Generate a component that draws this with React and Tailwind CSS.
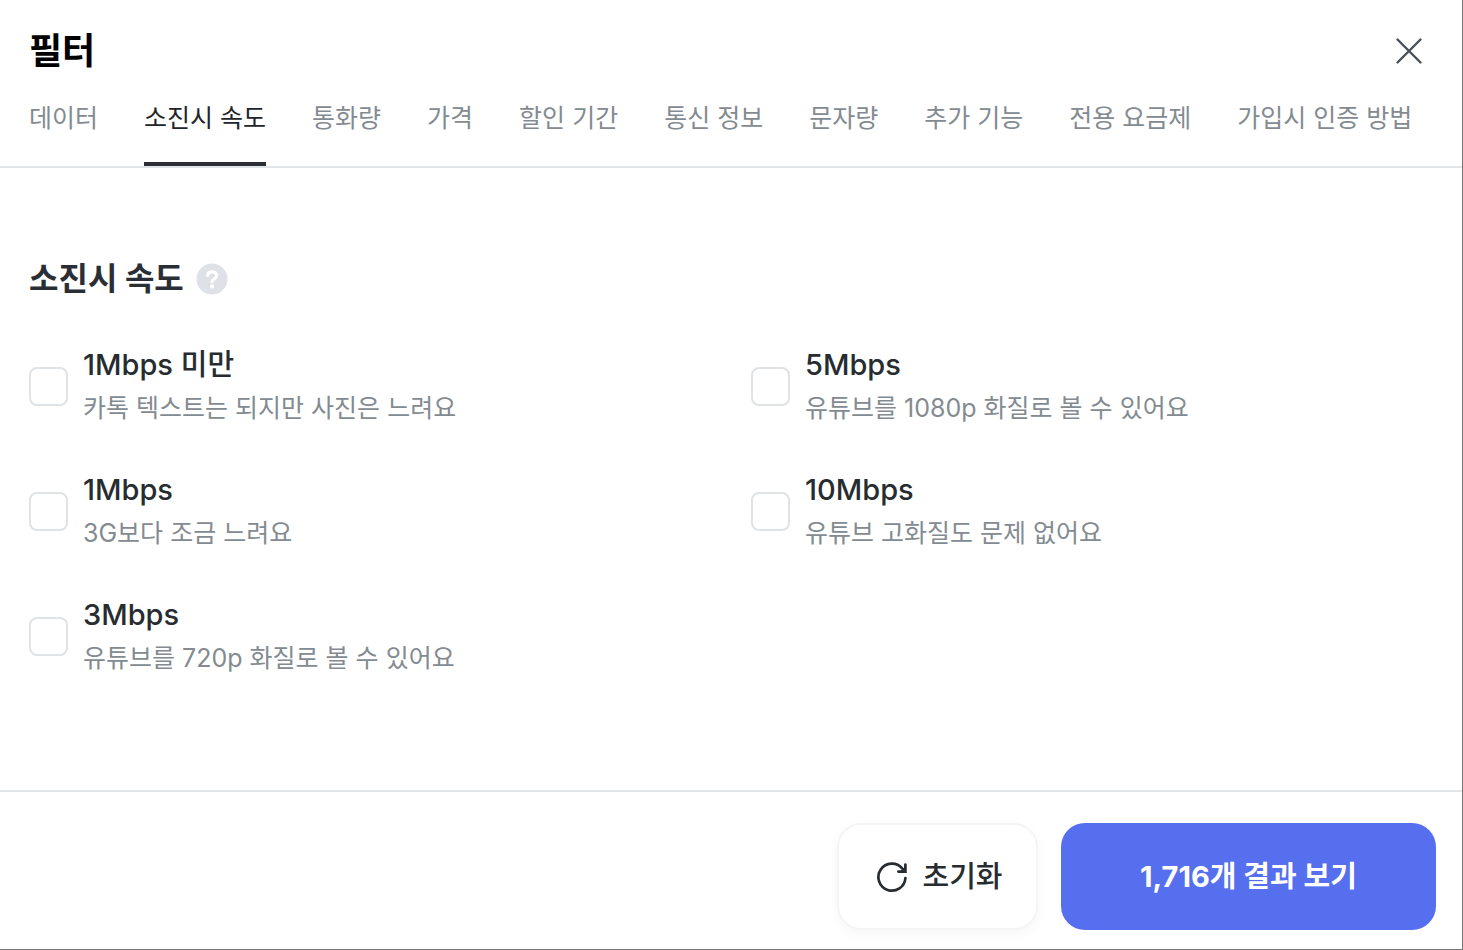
import { useState } from "react";

const TABS = [
    "데이터",
    "소진시 속도",
    "통화량",
    "가격",
    "할인 기간",
    "통신 정보",
    "문자량",
    "추가 기능",
    "전용 요금제",
    "가입시 인증 방법",
];

const SPEEDS = [
    { id: "under1", label: "1Mbps 미만", desc: "카톡 텍스트는 되지만 사진은 느려요" },
    { id: "1m", label: "1Mbps", desc: "3G보다 조금 느려요" },
    { id: "3m", label: "3Mbps", desc: "유튜브를 720p 화질로 볼 수 있어요" },
    { id: "5m", label: "5Mbps", desc: "유튜브를 1080p 화질로 볼 수 있어요" },
    { id: "10m", label: "10Mbps", desc: "유튜브 고화질도 문제 없어요" },
];

const CloseIcon = () => (
    <svg viewBox="0 0 28 28" className="w-7 h-7" fill="none" stroke="currentColor" strokeWidth="2.4" strokeLinecap="round">
        <path d="M2.5 2.5l23 23M25.5 2.5l-23 23" />
    </svg>
);

const ResetIcon = () => (
    <svg viewBox="0 0 32 32" className="w-8 h-8" fill="none" stroke="currentColor" strokeWidth="2.7" strokeLinecap="round">
        <path d="M29.4 17A13.5 13.5 0 1 1 26.2 7.4L28.6 10" />
        <path d="M29.4 3.6V10.6H22.4" />
        <path d="M29.4 5.5V10.6H24.3Z" fill="currentColor" stroke="none" />
    </svg>
);

const HelpIcon = () => (
    <svg viewBox="0 0 32 32" className="w-8 h-8" fill="none">
        <circle cx="16" cy="16" r="15.5" fill="#dee2e6" />
        <path
            d="M11.6 12.5C11.8 10.2 13.6 8.8 16.1 8.8C18.7 8.8 20.6 10.2 20.6 12.4C20.6 14.1 19.6 15 18.3 15.8C16.8 16.7 16.1 17.3 16.1 18.7"
            stroke="#fff"
            strokeWidth="3.2"
            strokeLinecap="round"
        />
        <circle cx="16.1" cy="23.4" r="2.1" fill="#fff" />
    </svg>
);

const SpeedOption = ({ option, checked, onToggle }) => (
    <label className="flex items-center gap-[15px] cursor-pointer">
        <input
            type="checkbox"
            checked={checked}
            onChange={onToggle}
            className="appearance-none shrink-0 w-[39px] h-[39px] rounded-lg border-2 border-[#dfe3e6] bg-white checked:bg-[#566fee] checked:border-[#566fee]"
        />
        <span className="flex flex-col">
            <span className="text-[29px] leading-[44px] font-medium text-[#272c30]">{option.label}</span>
            <span className="text-[25px] leading-[42px] text-[#838b91]">{option.desc}</span>
        </span>
    </label>
);

const App = () => {
    const [activeTab, setActiveTab] = useState("소진시 속도");
    const [selected, setSelected] = useState([]);

    const toggle = (id) => {
        setSelected((prev) => (prev.includes(id) ? prev.filter((s) => s !== id) : [...prev, id]));
    };

    return (
        <div
            lang="ko"
            className="min-h-screen flex flex-col bg-white border-r border-b border-[#777777] font-['Inter','Noto_Sans_CJK_KR',sans-serif]"
        >
            <header className="border-b-2 border-[#e3e6e8]">
                <div className="flex items-center justify-between pl-[29px] pr-[39px] pt-[25px]">
                    <h1 className="text-[36px] leading-[52px] font-bold text-black">필터</h1>
                    <button type="button" aria-label="닫기" className="text-[#495057]">
                        <CloseIcon />
                    </button>
                </div>
                <nav className="flex gap-[46px] pl-[29px] pt-[23px] overflow-hidden">
                    {TABS.map((tab) => (
                        <button
                            key={tab}
                            type="button"
                            onClick={() => setActiveTab(tab)}
                            className={`shrink-0 pb-[26px] border-b-4 text-[25px] leading-9 whitespace-nowrap ${
                                tab === activeTab
                                    ? "border-[#2b2f33] text-[#212529]"
                                    : "border-transparent text-[#838b91]"
                            }`}
                        >
                            {tab}
                        </button>
                    ))}
                </nav>
            </header>

            <main className="flex-1 px-[29px] pt-[87px] pb-10">
                <div className="flex items-center gap-3">
                    <h2 className="text-[32px] leading-[48px] font-bold text-[#2b2f35]">소진시 속도</h2>
                    <button type="button" aria-label="도움말">
                        <HelpIcon />
                    </button>
                </div>
                <div className="mt-10 grid grid-flow-col grid-cols-2 grid-rows-3 gap-x-10 gap-y-[39px]">
                    {SPEEDS.map((option) => (
                        <SpeedOption
                            key={option.id}
                            option={option}
                            checked={selected.includes(option.id)}
                            onToggle={() => toggle(option.id)}
                        />
                    ))}
                </div>
            </main>

            <footer className="flex justify-end gap-[23px] border-t-2 border-[#e3e6e8] pt-[31px] pb-[19px] pr-[26px]">
                <button
                    type="button"
                    onClick={() => setSelected([])}
                    className="flex items-center justify-center gap-[14px] pl-1 w-[201px] h-[107px] rounded-3xl border-2 border-[#f3f5f6] bg-white shadow-[0_4px_12px_rgba(0,0,0,0.04)] text-[29px] font-medium text-[#272c30]"
                >
                    <ResetIcon />
                    초기화
                </button>
                <button
                    type="button"
                    className="w-[375px] h-[107px] rounded-3xl bg-[#566fee] text-[29px] font-bold text-white"
                >
                    1,716개 결과 보기
                </button>
            </footer>
        </div>
    );
};

export default App;
